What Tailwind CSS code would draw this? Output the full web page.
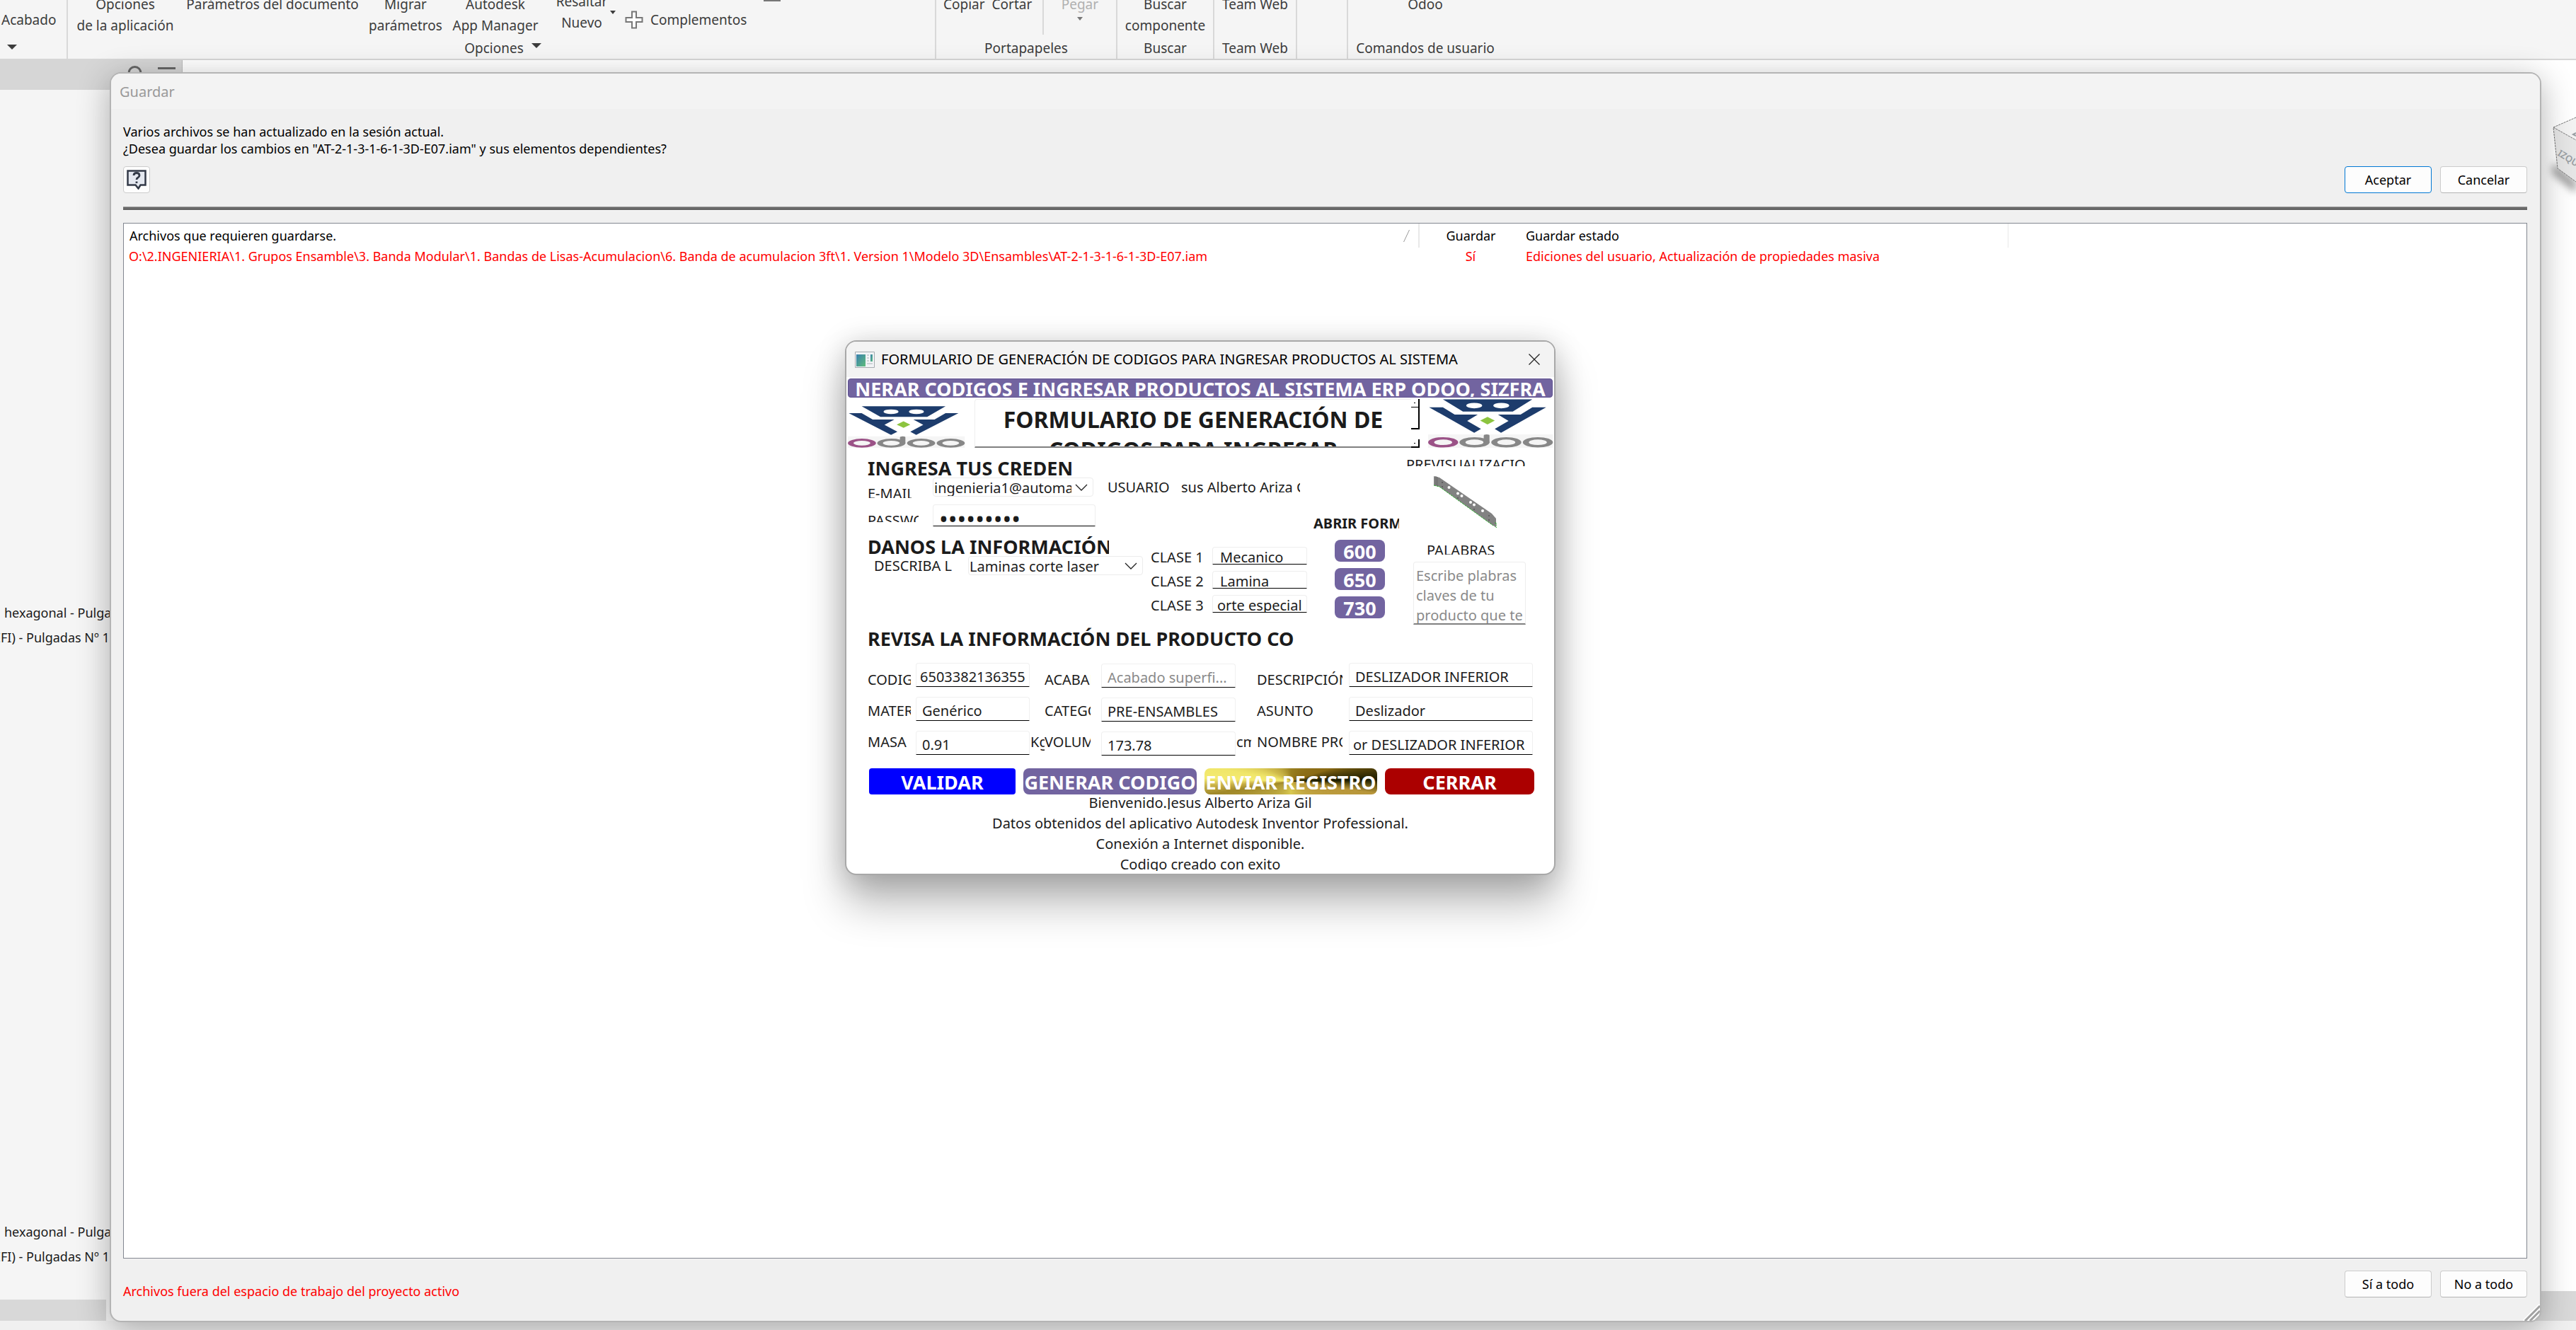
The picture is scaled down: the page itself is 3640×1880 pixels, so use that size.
<!DOCTYPE html>
<html lang="es">
<head>
<meta charset="utf-8">
<title>Guardar</title>
<script src="https://cdn.jsdelivr.net/npm/@tailwindcss/browser@4"></script>
</head>
<body class="relative flex h-screen flex-col overflow-hidden bg-white font-['Noto_Sans',sans-serif] text-[18px] text-black">

<!-- Ribbon -->
<header class="h-[85px] shrink-0 overflow-hidden border-b-2 border-[#d6d6d6] bg-[#f5f5f5] text-[19px] leading-[30px] text-[#3c3c3c]">
  <div class="-mt-[9px] flex h-[92px] whitespace-nowrap text-center">
    <section class="w-24 border-r-2 border-[#d9d9d9] pt-[22px] text-left">
      <div class="pl-[2px]">Acabado</div>
      <svg class="ml-[10px] mt-[20px] h-[7px] w-[14px]" viewBox="0 0 14 7"><path d="M0 0h14L7 7z" fill="#3c3c3c"/></svg>
    </section>
    <section class="flex w-[1227px] flex-col justify-between border-r-2 border-[#d9d9d9] pl-2">
      <div class="flex items-start gap-[10px]">
        <div class="w-[146px]">Opciones<br>de la aplicación</div>
        <div class="w-[250px]">Parámetros del documento</div>
        <div class="w-[106px]">Migrar<br>parámetros</div>
        <div class="w-[128px]">Autodesk<br>App Manager</div>
        <div class="-mt-1 ml-2 w-[80px]">Resaltar<br>Nuevo</div>
        <svg class="-ml-[10px] mt-6 h-[5px] w-[8px]" viewBox="0 0 8 5"><path d="M0 0h8L4 5z" fill="#3c3c3c"/></svg>
        <svg class="ml-[3px] mt-6 h-[26px] w-[26px]" viewBox="0 0 26 26"><path d="M10 1.500h6v8.500h8.500v6H16v8.500h-6V16H1.500v-6H10z" fill="#fff" stroke="#777" stroke-width="2"/></svg>
        <div class="mt-[22px]">Complementos</div>
        <div class="ml-[14px] mt-[9px] h-[2px] w-6 bg-[#777]"></div>
      </div>
      <div class="flex items-center justify-center gap-[11px] pr-1">Opciones
        <svg class="-mt-2 h-[7px] w-[14px]" viewBox="0 0 14 7"><path d="M0 0h14L7 7z" fill="#3c3c3c"/></svg>
      </div>
    </section>
    <section class="flex w-[256px] flex-col justify-between border-r-2 border-[#d9d9d9]">
      <div class="flex">
        <div class="flex h-[58px] w-[153px] gap-[10px] border-r-2 border-[#d9d9d9] pl-[10px]"><span>Copiar</span><span>Cortar</span></div>
        <div class="flex w-[103px] flex-col items-center text-[#b0b0b0]">Pegar
          <svg class="mt-[3px] h-[5px] w-[8px]" viewBox="0 0 8 5"><path d="M0 0h8L4 5z" fill="#777"/></svg>
        </div>
      </div>
      <div>Portapapeles</div>
    </section>
    <section class="flex w-[137px] flex-col justify-between border-r-2 border-[#d9d9d9]"><div>Buscar<br>componente</div><div>Buscar</div></section>
    <section class="flex w-[117px] flex-col justify-between border-r-2 border-[#d9d9d9]"><div>Team Web</div><div>Team Web</div></section>
    <section class="w-[72px] border-r-2 border-[#d9d9d9]"></section>
    <section class="flex w-[218px] flex-col justify-between"><div>Odoo</div><div>Comandos de usuario</div></section>
  </div>
</header>

<!-- Workspace behind the dialogs -->
<div class="flex grow">
  <aside class="flex w-[258px] flex-col overflow-hidden bg-[#f5f5f5]">
    <div class="flex h-[42px] items-start gap-[22px] border-r border-[#bbb] bg-[#d6d6d6] pl-[180px] pt-2">
      <svg class="h-[22px] w-[21px]" viewBox="0 0 21 22"><circle cx="10.500" cy="10" r="8.500" fill="none" stroke="#666" stroke-width="3"/></svg>
      <div class="mt-[2px] h-[3px] w-[25px] bg-[#666]"></div>
    </div>
    <div class="grow whitespace-nowrap pt-[722px] leading-[35px] text-[#1a1a1a]">
      <div class="pl-[6px]">hexagonal - Pulgadas</div>
      <div class="-ml-[9px]">EFI) - Pulgadas Nº 1</div>
      <div class="pl-[6px] pt-[805px]">hexagonal - Pulgadas</div>
      <div class="-ml-[9px]">EFI) - Pulgadas Nº 1</div>
    </div>
    <div class="h-[30px] w-[150px] bg-[#d8d8d8]"></div>
    <div class="h-[13px] bg-[#f0f0f0]"></div>
  </aside>
  <main class="flex grow flex-col">
    <svg class="ml-auto mt-[60px] h-[150px] w-[50px]" viewBox="0 0 50 150">
      <defs><filter id="soft" x="-50%" y="-50%" width="200%" height="200%"><feGaussianBlur stdDeviation="6"/></filter></defs>
      <path d="M18 85L50 112V128L16 100z" fill="#999" filter="url(#soft)"/>
      <path d="M18 35L50 21V53z" fill="#f3f3f3"/><path d="M18 35L50 53V112L24 93z" fill="#e6e6e6"/>
      <path d="M50 21L18 35L24 93L50 112M18 35L50 53" fill="none" stroke="#777" stroke-dasharray="3 1"/>
      <path d="M50 43L46 45L50 47" fill="none" stroke="#999ea3" stroke-width="2"/>
      <text x="23" y="74" transform="rotate(32 23 74)" font-size="13" font-weight="600" fill="#999ea3" font-family="Noto Sans, sans-serif">IZQUIE</text>
    </svg>
    <div class="mt-auto h-[42px] bg-[#d9d9d9]"></div>
    <div class="h-[13px] bg-[#f0f0f0]"></div>
  </main>
</div>

<!-- Save dialog -->
<div role="dialog" aria-label="Guardar" class="absolute bottom-[11px] left-[155px] right-[49px] top-[102px] flex flex-col overflow-hidden rounded-2xl border-2 border-[#b4b4b4] bg-[#f0f0f0] shadow-[0_10px_46px_rgba(0,0,0,0.3)]">
  <div class="h-[50px] shrink-0 bg-[#f3f3f3] pl-3 text-[20px] leading-[52px] text-[#999]">Guardar</div>
  <div class="flex grow flex-col pl-[17px] pr-[18px]">
    <p class="pt-5 leading-6">Varios archivos se han actualizado en la sesión actual.<br>¿Desea guardar los cambios en "AT-2-1-3-1-6-1-3D-E07.iam" y sus elementos dependientes?</p>
    <div class="flex h-[51px] items-end gap-3">
      <button aria-label="Ayuda" class="mr-auto grid h-[38px] w-[38px] place-items-center rounded border border-[#ccc] bg-[#fdfdfd]">
        <svg class="h-[28px] w-[28px]" viewBox="0 0 28 28"><path d="M1.500 1.500h25v20h-7l-3 5-4-5h-11z" fill="#e4e8f0" stroke="#333a48" stroke-width="2.500"/><path d="M10 8q0-3.500 4-3.500t4 3.500q0 2-2 3t-2 3M14 16.500v2.500" fill="none" stroke="#333a48" stroke-width="2.800"/></svg>
      </button>
      <button class="h-[38px] w-[123px] rounded border border-[#0078d4] bg-[#fdfdfd]">Aceptar</button>
      <button class="h-[38px] w-[123px] rounded border border-[#ccc] border-b-[#b5b5b5] bg-[#fdfdfd]">Cancelar</button>
    </div>
    <div class="mt-[19px] h-[6px] border-b border-t border-b-white border-t-[#999] bg-[#696969]"></div>
    <div class="mt-[17px] grow border border-[#828790] bg-white">
      <table class="w-full table-fixed text-left">
        <colgroup><col class="w-[1830px]"><col class="w-[146px]"><col class="w-[686px]"><col></colgroup>
        <thead><tr class="leading-[34px]">
          <th class="border-r-2 border-[#e8e8e8] p-0 pl-2 font-normal"><div class="flex items-center justify-between pr-3">Archivos que requieren guardarse.<svg class="h-[17px] w-[9px]" viewBox="0 0 9 17"><path d="M8.500 0L.5 17" stroke="#999"/></svg></div></th>
          <th class="p-0 text-center font-normal">Guardar</th>
          <th class="border-r border-[#e8e8e8] p-0 pl-[5px] font-normal">Guardar estado</th>
          <th class="p-0"></th></tr></thead>
        <tbody><tr class="leading-6 text-[#f00]">
          <td class="p-0 pl-[7px]">O:\2.INGENIERIA\1. Grupos Ensamble\3. Banda Modular\1. Bandas de Lisas-Acumulacion\6. Banda de acumulacion 3ft\1. Version 1\Modelo 3D\Ensambles\AT-2-1-3-1-6-1-3D-E07.iam</td>
          <td class="p-0 text-center">Sí</td>
          <td class="p-0 pl-[5px]">Ediciones del usuario, Actualización de propiedades masiva</td>
          <td class="p-0"></td></tr></tbody>
      </table>
    </div>
    <div class="flex h-[88px] shrink-0 items-start gap-3 pt-[17px]">
      <p class="mr-auto pt-[15px] leading-7 text-[#f00]">Archivos fuera del espacio de trabajo del proyecto activo</p>
      <button class="h-[38px] w-[123px] rounded border border-[#ccc] border-b-[#b5b5b5] bg-[#fdfdfd]">Sí a todo</button>
      <button class="h-[38px] w-[123px] rounded border border-[#ccc] border-b-[#b5b5b5] bg-[#fdfdfd]">No a todo</button>
    </div>
  </div>
  <svg class="absolute bottom-0 right-0 h-6 w-6" viewBox="0 0 24 24"><path d="M0 24L24 0M7 24L24 7M14 24L24 14" stroke="#fff" stroke-width="2"/><path d="M3 24L24 3M10 24L24 10M17 24L24 17" stroke="#a0a0a0" stroke-width="3"/></svg>
</div>

<!-- Code generation form -->
<form role="dialog" aria-label="Formulario" onsubmit="return false" class="absolute left-[1194px] top-[481px] w-[1004px] overflow-hidden rounded-2xl border-2 border-[#a8a8a8] bg-white text-[20px] text-[#1b1b1b] shadow-[0_40px_60px_rgba(0,0,0,0.28),0_4px_40px_rgba(0,0,0,0.18)]">
  <div class="flex h-[50px] items-center bg-[#f3f3f3] pl-3 pr-5 text-black">
    <svg class="h-[23px] w-[28px]" viewBox="0 0 28 23"><defs><linearGradient id="app" x1="0" y1="0" x2="1" y2="1"><stop offset="0" stop-color="#3a7fae"/><stop offset="1" stop-color="#5fbd7c"/></linearGradient></defs><path d="M.5.5h27v22H.5z" fill="#f2f4f6" stroke="#a7abb0"/><path d="M2 4h13v17H2z" fill="url(#app)"/><path d="M22 4h3v10h-3z" fill="url(#app)"/><path d="M17 5h3M17 9h3M17 13h3M17 17h8" stroke="#cfd3d8" stroke-width="2"/></svg>
    <span class="ml-[9px] grow whitespace-nowrap leading-[52px]">FORMULARIO DE GENERACIÓN DE CODIGOS PARA INGRESAR PRODUCTOS AL SISTEMA</span>
    <button aria-label="Cerrar ventana"><svg class="h-4 w-4" viewBox="0 0 16 16"><path d="M.5.5l15 15M15.500.5l-15 15" stroke="#222" stroke-width="1.300"/></svg></button>
  </div>

  <div class="mx-[2px] mt-[2px] flex h-[27px] justify-center overflow-hidden whitespace-nowrap rounded border border-[#5f5290] bg-[#7264a0] text-[27px] font-bold leading-[28px] text-white">NERAR CODIGOS E INGRESAR PRODUCTOS AL SISTEMA ERP ODOO, SIZFRA</div>

  <div class="flex h-[71px] items-end pl-[2px] pr-[1px]">
    <svg class="h-[61px] w-[166px]" viewBox="24 96 500 184" preserveAspectRatio="none">
      <g id="logo"><g fill="#1d3c6c"><path d="M83 103H440L362 148H163z"/><path d="M28 132H83L130 159H222L180 182L235 211L208 225z"/><path d="M495 132H440L393 159H303L345 182L290 211L315 225z"/></g>
      <g fill="#fff"><ellipse cx="208" cy="126" rx="32" ry="10"/><ellipse cx="316" cy="126" rx="32" ry="10"/></g>
      <path d="M232 181L261 167L290 181L261 195z" fill="#8cc43f"/>
      <path d="M24 231H522V280H24z" fill="#f5f5f5"/>
      <g fill-rule="evenodd"><path fill="#9b5287" d="M24 260a60 19 0 1 0 120 0a60 19 0 1 0-120 0zM48 260a36 10 0 1 0 72 0a36 10 0 1 0-72 0z"/>
      <path fill="#878787" d="M149 260a60 19 0 1 0 120 0a60 19 0 1 0-120 0zM173 260a36 10 0 1 0 72 0a36 10 0 1 0-72 0z"/>
      <path fill="#878787" d="M276 260a60 19 0 1 0 120 0a60 19 0 1 0-120 0zM300 260a36 10 0 1 0 72 0a36 10 0 1 0-72 0z"/>
      <path fill="#878787" d="M402 260a60 19 0 1 0 120 0a60 19 0 1 0-120 0zM426 260a36 10 0 1 0 72 0a36 10 0 1 0-72 0z"/></g>
      <path d="M246 262V236q0-5 12-5t11 5V262z" fill="#878787"/></g>
    </svg>
    <div class="ml-[13px] flex h-[69px] w-[629px]">
      <h1 class="h-full w-[617px] overflow-hidden rounded-tl border-b-2 border-l border-t border-b-[#808080] border-l-[#eee] border-t-[#eee] px-8 pt-[6px] text-center text-[32px] font-bold leading-[43px]">FORMULARIO DE GENERACIÓN DE CODIGOS PARA INGRESAR</h1>
      <div class="flex w-3 flex-col">
        <div class="grid h-3 place-items-center border-b border-r-2 border-black"><div class="h-px w-[2px] bg-black"></div></div>
        <div class="h-[31px] border-b-2 border-r-2 border-black"></div>
        <div class="mt-auto grid h-3 place-items-center border-b-2 border-r-2 border-black"><div class="h-px w-[2px] bg-black"></div></div>
      </div>
    </div>
    <svg class="ml-auto h-[69px] w-[177px]" viewBox="24 102 500 178" preserveAspectRatio="none"><use href="#logo"/></svg>
  </div>

  <div class="flex items-start pl-[30px]">
    <div class="w-[622px]">
      <h2 class="mt-[14px] h-[28px] w-[291px] overflow-hidden whitespace-nowrap text-[27px] font-bold leading-[30px]">INGRESA TUS CREDENCIALES</h2>
      <div class="flex h-[27px] items-start leading-[28px]">
        <label for="mail" class="h-[29px] w-[62px] overflow-hidden whitespace-nowrap leading-[46px]">E-MAIL</label>
        <div class="relative ml-[30px]">
          <select id="mail" class="block h-[27px] w-[227px] appearance-none rounded border border-[#ececec] bg-white pl-[1px] pr-[30px] leading-[28px]"><option>ingenieria1@automatizacion</option></select>
          <svg class="pointer-events-none absolute right-2 top-[9px] h-[10px] w-[18px]" viewBox="0 0 18 10"><path d="M1 1l8 8 8-8" fill="none" stroke="#222" stroke-width="1.300"/></svg>
        </div>
        <label for="user" class="ml-[20px] w-[104px]">USUARIO</label>
        <input id="user" class="h-[28px] w-[168px]" value="sus Alberto Ariza Gil">
      </div>
      <div class="mt-[11px] flex h-[31px] items-start">
        <label for="pass" class="h-[25px] w-[72px] overflow-hidden leading-[46px]">PASSWORD</label>
        <input id="pass" type="password" value="123456789" class="ml-[20px] h-[31px] w-[230px] rounded-t border border-[#eee] border-b-black pl-[8px] pt-[8px] text-[34px] leading-6">
      </div>
      <div class="flex items-start">
        <div class="w-[400px]">
          <h2 class="mt-[14px] h-[28px] w-[341px] overflow-hidden whitespace-nowrap text-[27px] font-bold leading-[30px]">DANOS LA INFORMACIÓN</h2>
          <div class="flex pl-[9px] leading-[28px]">
            <label for="kind" class="w-[113px] overflow-hidden whitespace-nowrap">DESCRIBA L</label>
            <div class="relative ml-[20px]">
              <select id="kind" class="block h-[27px] w-[247px] appearance-none rounded border border-[#ececec] bg-white pl-[1px] pr-[30px] leading-[28px]"><option>Laminas corte laser</option></select>
              <svg class="pointer-events-none absolute right-2 top-[9px] h-[10px] w-[18px]" viewBox="0 0 18 10"><path d="M1 1l8 8 8-8" fill="none" stroke="#222" stroke-width="1.300"/></svg>
            </div>
          </div>
        </div>
        <div class="mt-[29px] flex flex-col gap-[9px] leading-[30px]">
          <div class="flex h-[25px]"><label for="c1" class="w-[87px]">CLASE 1</label><input id="c1" value="Mecanico" class="h-[25px] w-[134px] rounded-t border border-[#eee] border-b-black pl-[10px] pt-[3px] leading-6"></div>
          <div class="flex h-[25px]"><label for="c2" class="w-[87px]">CLASE 2</label><input id="c2" value="Lamina" class="h-[25px] w-[134px] rounded-t border border-[#eee] border-b-black pl-[10px] pt-[3px] leading-6"></div>
          <div class="flex h-[25px]"><label for="c3" class="w-[87px]">CLASE 3</label><input id="c3" value="orte especial" class="h-[25px] w-[134px] rounded-t border border-[#eee] border-b-black pl-[6px] pt-[3px] leading-6"></div>
        </div>
      </div>
    </div>

    <div class="ml-2 mt-[92px] w-[121px]">
      <h3 class="h-7 overflow-hidden whitespace-nowrap font-bold leading-[30px]">ABRIR FORMULARIO</h3>
      <div class="ml-[30px] mt-[10px] flex w-[71px] flex-col gap-[9px] text-[27px] font-bold leading-[34px] text-white">
        <button class="h-[31px] rounded-lg bg-[#7264a0]">600</button>
        <button class="h-[31px] rounded-lg bg-[#7264a0]">650</button>
        <button class="h-[31px] rounded-lg bg-[#7264a0]">730</button>
      </div>
    </div>

    <div class="ml-[10px] w-[180px]">
      <div class="mt-[7px] h-[19px] w-[168px] overflow-hidden whitespace-nowrap leading-[34px]">PREVISUALIZACIO</div>
      <svg class="ml-[39px] mt-[14px] h-[73px] w-[89px]" viewBox="0 0 89 73">
        <path d="M0 0L8 2L82 53L88 60V72L84 70L8 15L0 13z" fill="#828282"/>
        <path d="M0 13L8 15L84 70M86 66l3 1v6l-3-2" fill="none" stroke="#2faa2f" stroke-dasharray="3 1"/>
        <path d="M3 0v13M5 1v13" stroke="#6a6a6a"/>
        <g fill="#fff"><ellipse cx="21.500" cy="16" rx="2" ry="2"/><ellipse cx="34" cy="24.500" rx="2" ry="2"/><ellipse cx="39.500" cy="28" rx="2" ry="2"/><ellipse cx="52" cy="37" rx="2" ry="2"/><ellipse cx="57" cy="40.500" rx="2" ry="2"/><ellipse cx="69" cy="49" rx="2" ry="2"/></g>
        <g fill="#555"><circle cx="12" cy="9" r="1"/><circle cx="12" cy="15" r="1"/><circle cx="34" cy="31" r="1"/><circle cx="57" cy="47" r="1"/><circle cx="78" cy="56" r="1"/><circle cx="78" cy="62" r="1"/></g>
      </svg>
      <label for="words" class="ml-[29px] mt-[14px] block h-6 w-[100px] overflow-hidden leading-[36px]">PALABRAS</label>
      <textarea id="words" class="ml-[10px] mt-[10px] block h-[89px] w-[159px] resize-none overflow-hidden rounded-t border border-b-2 border-[#eee] border-b-[#808080] pl-[3px] pt-[5px] leading-7 placeholder:text-[#8a8a8a]" placeholder="Escribe plabras claves de tu producto que te"></textarea>
    </div>
  </div>

  <h2 class="ml-[30px] mt-1 h-[28px] w-[611px] overflow-hidden whitespace-nowrap text-[27px] font-bold leading-[31px]">REVISA LA INFORMACIÓN DEL PRODUCTO CO</h2>

  <div class="mt-[22px] flex items-start whitespace-nowrap pl-[30px] leading-7">
    <div class="mt-[10px] flex w-[68px] flex-col gap-4">
      <label for="f1" class="w-[61px] overflow-hidden">CODIGO</label><label for="f2" class="w-[61px] overflow-hidden">MATERIAL</label><label for="f3" class="w-[61px] overflow-hidden">MASA</label>
    </div>
    <div class="flex w-[161px] flex-col gap-[14px]">
      <input id="f1" value="6503382136355" class="h-[34px] rounded-t border border-[#f0f0f0] border-b-black pl-[5px] pt-1">
      <input id="f2" value="Genérico" class="h-[34px] rounded-t border border-[#f0f0f0] border-b-black pl-[8px] pt-1">
      <input id="f3" value="0.91" class="h-[34px] rounded-t border border-[#f0f0f0] border-b-black pl-[8px] pt-1">
    </div>
    <div class="mt-[98px] w-[21px] overflow-hidden pl-px">Kg</div>
    <div class="mt-[10px] flex w-[80px] flex-col gap-4">
      <label for="g1" class="w-[65px] overflow-hidden">ACABADO</label><label for="g2" class="w-[65px] overflow-hidden">CATEGORIA</label><label for="g3" class="w-[65px] overflow-hidden">VOLUMEN</label>
    </div>
    <div class="mt-px flex w-[190px] flex-col gap-[14px]">
      <input id="g1" placeholder="Acabado superfi..." class="h-[34px] rounded-t border border-[#f0f0f0] border-b-black pl-[8px] pt-1 placeholder:text-[#8a8a8a]">
      <input id="g2" value="PRE-ENSAMBLES" class="h-[34px] rounded-t border border-[#f0f0f0] border-b-black pl-[8px] pt-1">
      <input id="g3" value="173.78" class="h-[34px] rounded-t border border-[#f0f0f0] border-b-black pl-[8px] pt-1">
    </div>
    <div class="mt-[98px] w-[22px] overflow-hidden pl-px">cm</div>
    <div class="ml-[8px] mt-[10px] flex w-[130px] flex-col gap-4">
      <label for="h1" class="w-[121px] overflow-hidden">DESCRIPCIÓN</label><label for="h2" class="w-[121px] overflow-hidden">ASUNTO</label><label for="h3" class="w-[121px] overflow-hidden">NOMBRE PRODUCTO</label>
    </div>
    <div class="flex w-[260px] flex-col gap-[14px]">
      <input id="h1" value="DESLIZADOR INFERIOR" class="h-[34px] rounded-t border border-[#f0f0f0] border-b-black pl-[8px] pt-1">
      <input id="h2" value="Deslizador" class="h-[34px] rounded-t border border-[#f0f0f0] border-b-black pl-[8px] pt-1">
      <input id="h3" value="or DESLIZADOR INFERIOR" class="h-[34px] rounded-t border border-[#f0f0f0] border-b-black pl-[5px] pt-1">
    </div>
  </div>

  <div class="mt-[18px] flex h-[37px] gap-[11px] whitespace-nowrap pl-8 text-[27px] font-bold leading-[40px] text-white">
    <button class="w-[207px] rounded bg-[#0000ff]">VALIDAR</button>
    <button class="w-[245px] rounded-lg bg-[#7264a0]">GENERAR CODIGO</button>
    <button class="w-[244px] rounded-lg bg-[conic-gradient(#9a8020,#8a6a14_72deg,#4a3c08_82deg,#1a1c00_89deg,#6b5a18_93deg,#b8963a_98deg,#d8c850_180deg,#b09a38_250deg,#a08828_261deg,#c8b048_267deg,#f4ea70_272deg,#f0e66a_280deg,#d0bc4c_300deg,#9a8020)]">ENVIAR REGISTRO</button>
    <button class="w-[211px] rounded-lg bg-[#ab0000]">CERRAR</button>
  </div>

  <div class="-mt-2 pb-1 text-center leading-[40px]">
    <p class="h-[29px] overflow-hidden">Bienvenido.Jesus Alberto Ariza Gil</p>
    <p class="h-[29px] overflow-hidden">Datos obtenidos del aplicativo Autodesk Inventor Professional.</p>
    <p class="h-[29px] overflow-hidden">Conexión a Internet disponible.</p>
    <p class="h-[29px] overflow-hidden">Codigo creado con exito</p>
  </div>
</form>
</body>
</html>
